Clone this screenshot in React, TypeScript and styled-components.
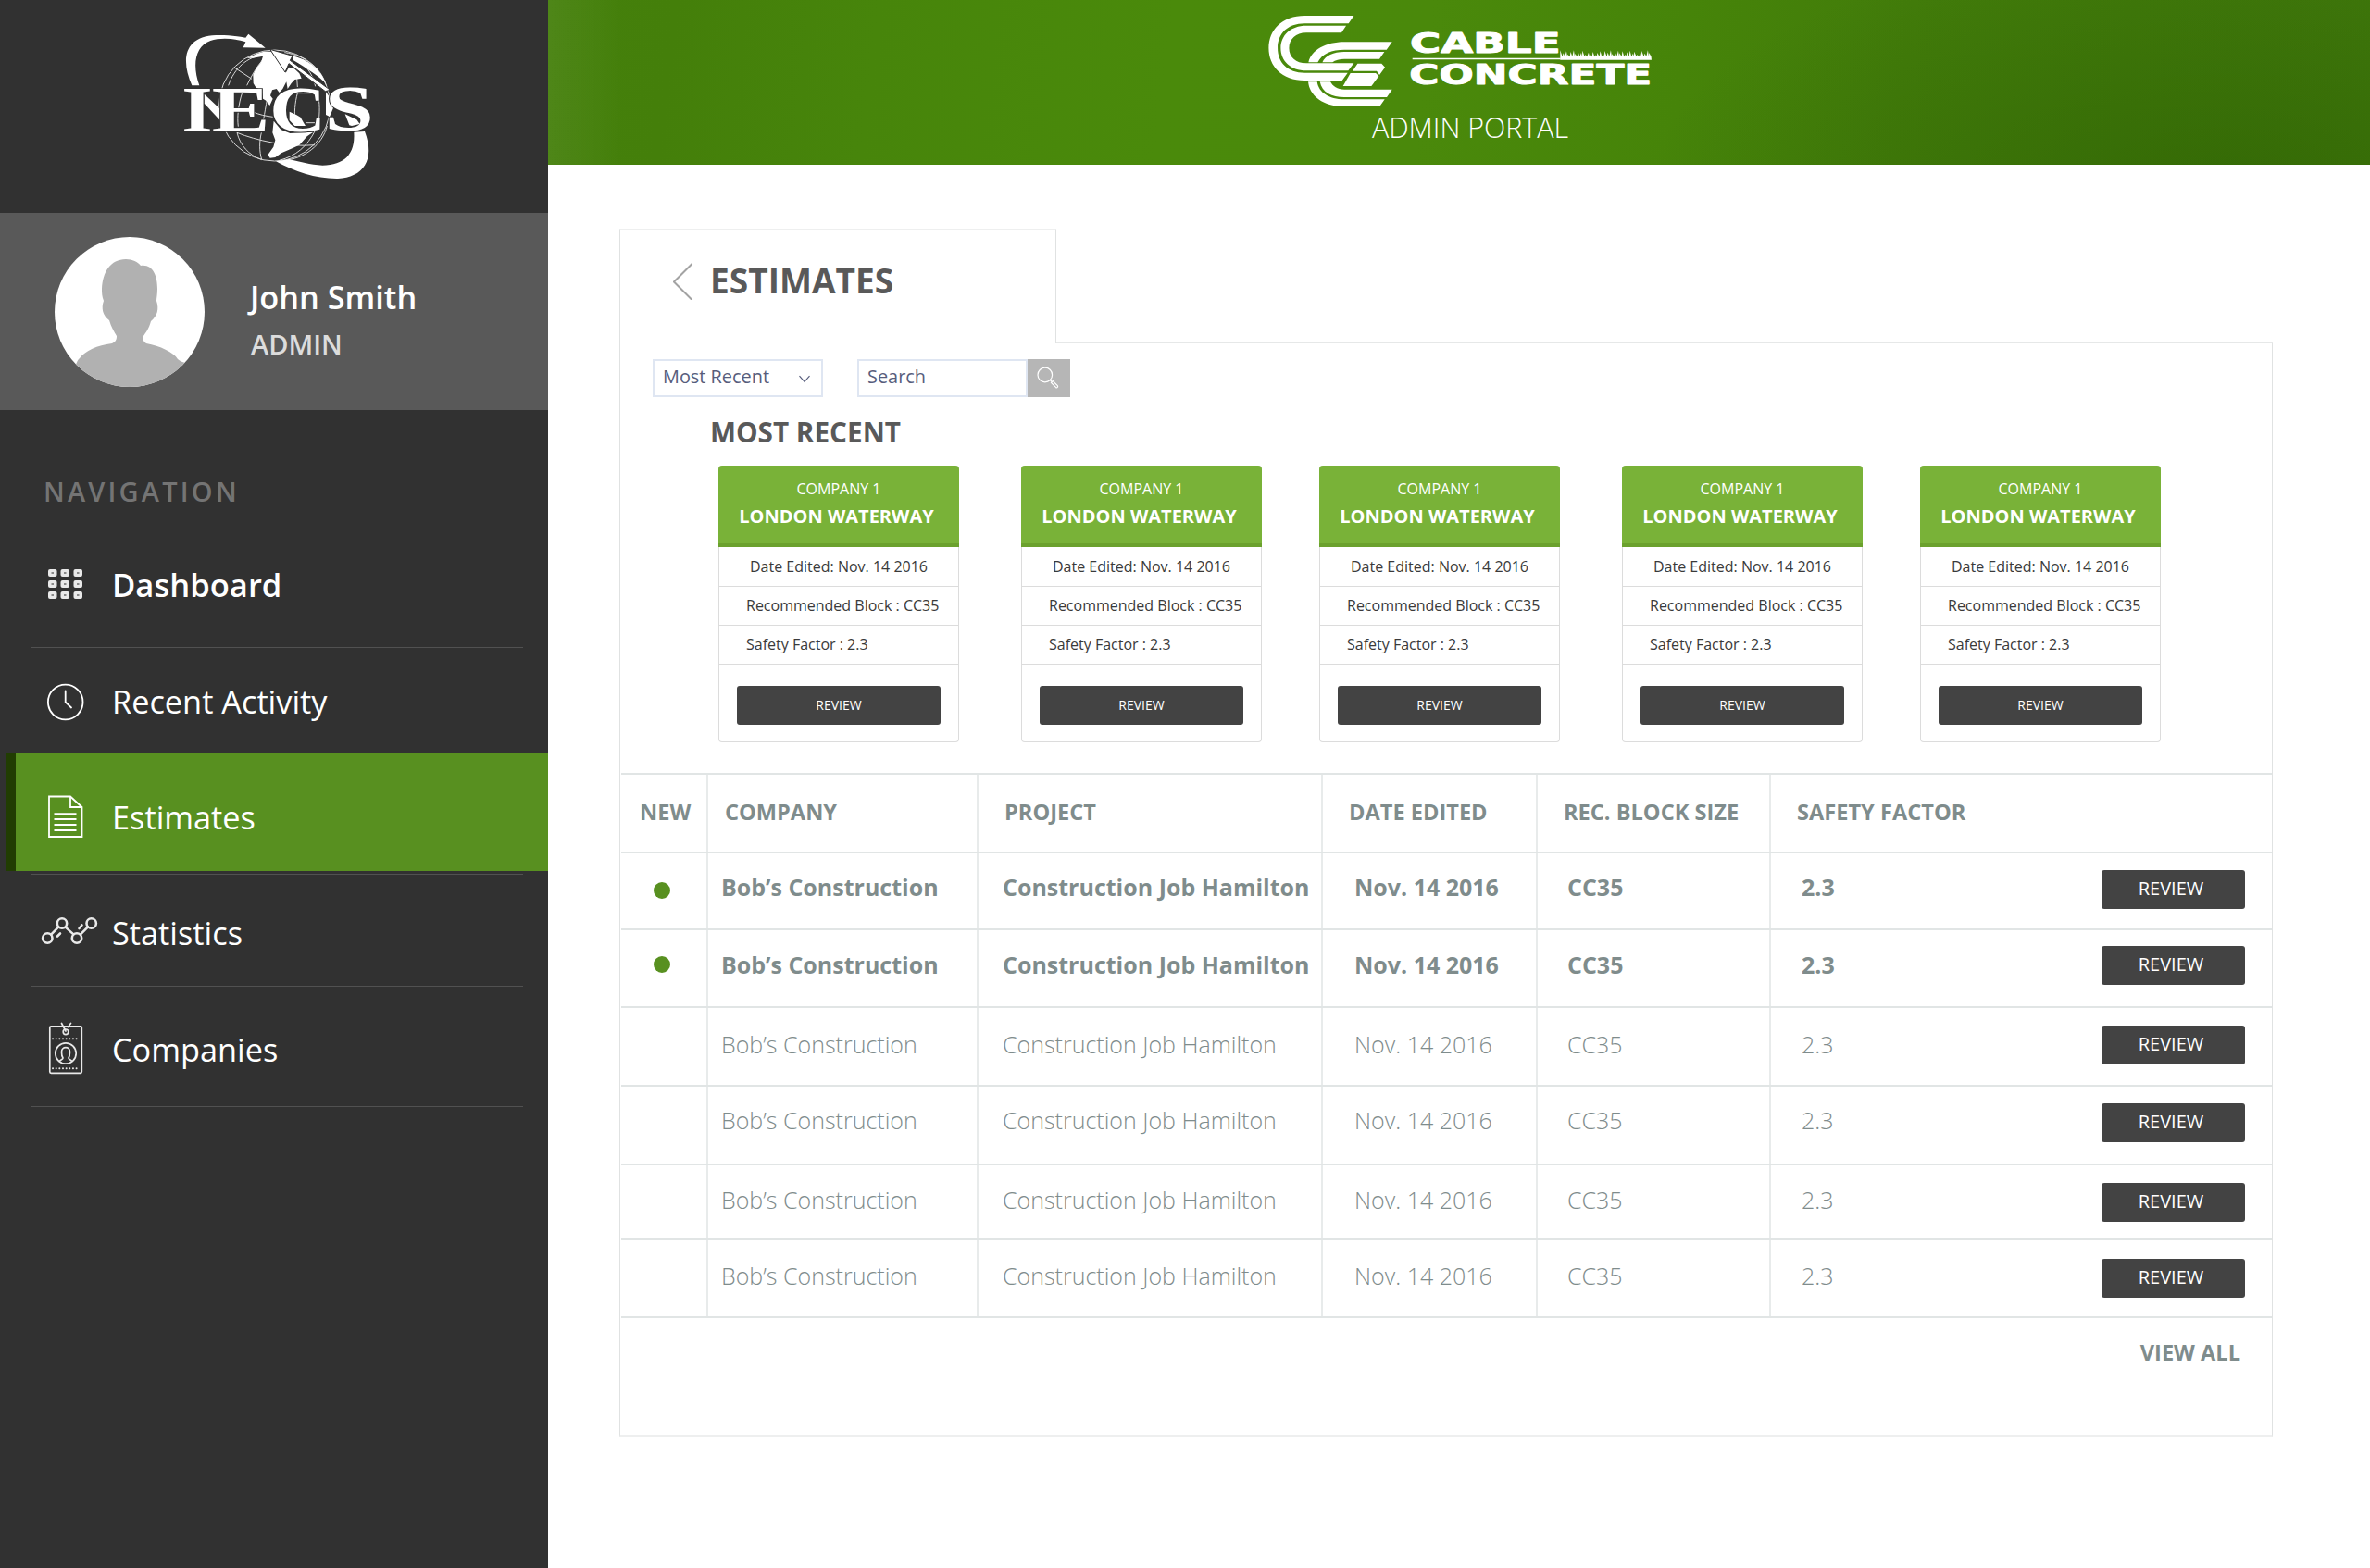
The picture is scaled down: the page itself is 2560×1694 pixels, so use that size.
import React from 'react';
import styled, { createGlobalStyle } from 'styled-components';

const GlobalStyle = createGlobalStyle`
  * { box-sizing: border-box; }
  html, body { margin: 0; padding: 0; background: #fff; }
  body { font-family: "Open Sans", "Noto Sans", sans-serif; }
  svg { display: block; }
  button { font-family: inherit; }
`;

const Page = styled.div`
  display: flex;
  width: 2560px;
  height: 1694px;
  overflow: hidden;
`;

/* ---------- Sidebar ---------- */

const Sidebar = styled.aside`
  width: 592px;
  flex: none;
  background: #313131;
  color: #fff;
`;

const Brand = styled.div`
  height: 230px;
  padding: 10px 0 0 150px;
`;

const Profile = styled.section`
  display: flex;
  height: 213px;
  padding: 26px 0 0 59px;
  background: #595959;
`;

const ProfileText = styled.div`
  margin: 43px 0 0 49px;
`;

const UserName = styled.div`
  font-size: 34.3px;
  font-weight: 600;
  line-height: 44px;
`;

const UserRole = styled.div`
  margin: 9px 0 0 1px;
  font-size: 29px;
  font-weight: 600;
  line-height: 40px;
  color: #dcdcdc;
`;

const NavHeading = styled.h2`
  margin: 0;
  height: 119px;
  padding: 68px 0 0 47px;
  font-size: 29px;
  font-weight: 600;
  line-height: 40px;
  letter-spacing: 3.2px;
  color: #747474;
`;

const NavItem = styled.a<{ $height: number; $bold?: boolean; $active?: boolean; $shift?: number }>`
  display: flex;
  align-items: center;
  height: ${(p) => p.$height}px;
  margin-left: ${(p) => (p.$active ? 7 : 0)}px;
  border-left: ${(p) => (p.$active ? '10px solid #213d02' : 'none')};
  padding: ${(p) => p.$shift ?? 0}px 0 0 ${(p) => (p.$active ? 23 : 40)}px;
  background: ${(p) => (p.$active ? '#589020' : 'transparent')};
  font-size: ${(p) => (p.$bold ? 34.6 : 34.3)}px;
  font-weight: ${(p) => (p.$bold ? 600 : 400)};
  line-height: 48px;
`;

const NavLabel = styled.span`
  margin-left: 11px;
  padding-top: 2px;
`;

const NavDivider = styled.div<{ $gap?: number }>`
  height: 1px;
  margin: ${(p) => p.$gap ?? 0}px 27px 0 34px;
  background: #515151;
`;

/* ---------- Main ---------- */

const Main = styled.main`
  flex: 1;
  display: flex;
  flex-direction: column;
`;

const Header = styled.header`
  display: flex;
  flex-direction: column;
  align-items: center;
  height: 178px;
  padding: 17px 0 0 2px;
  background:
    linear-gradient(90deg, rgba(255, 255, 255, 0.05), rgba(255, 255, 255, 0) 4%),
    radial-gradient(ellipse 620px 260px at 92% 110%, rgba(40, 90, 0, 0.45), rgba(40, 90, 0, 0)),
    linear-gradient(97deg, #45800c 0%, #447f0a 7%, #47850b 18%, #4a8a0b 34%, #4a890b 48%, #468409 62%, #427c0a 74%, #40790a 86%, #3f770b 100%);
`;

const PortalName = styled.div`
  margin-top: 2px;
  padding-left: 22px;
  font-size: 30.4px;
  font-weight: 300;
  line-height: 41px;
  color: #fff;
`;

const Content = styled.div`
  width: 1786px;
  margin: 69px 0 0 77px;
`;

const TabRow = styled.div`
  display: flex;
  height: 124px;
`;

const Tab = styled.div`
  display: flex;
  width: 472px;
  padding: 35px 0 0 57px;
  border: 1px solid #e0e2e2;
  border-top: 2px solid #eeefef;
  border-bottom: none;
`;

const TabTitle = styled.h1`
  margin: -3px 0 0 18px;
  font-size: 37.1px;
  font-weight: 700;
  line-height: 44px;
  color: #595959;
`;

const TabRest = styled.div`
  flex: 1;
  border-bottom: 2px solid #e6e8e8;
`;

const Panel = styled.section`
  height: 1181px;
  padding-top: 17px;
  border: 1px solid #e0e2e2;
  border-top: none;
  border-bottom: 2px solid #eeefef;
`;

const Filters = styled.div`
  display: flex;
  height: 41px;
  padding-left: 35px;
`;

const Field = styled.div`
  display: flex;
  justify-content: space-between;
  width: 184px;
  height: 41px;
  padding: 0 12px 0 9px;
  border: 2px solid #dfe6f2;
  font-size: 19.9px;
  line-height: 33px;
  color: #575d7c;
`;

const SearchGroup = styled.div`
  display: flex;
  margin-left: 37px;
`;

const SearchButton = styled.button`
  width: 46px;
  height: 41px;
  padding: 0;
  border: 0;
  background: #b6b6b6;
`;

const SectionTitle = styled.h2`
  margin: 0;
  height: 74px;
  padding: 18px 0 0 97px;
  font-size: 29.7px;
  font-weight: 700;
  line-height: 40px;
  color: #595959;
`;

const Cards = styled.div`
  display: grid;
  grid-template-columns: 327px 322px 327px 322px 260px;
  height: 332px;
  padding-left: 106px;
`;

const Card = styled.article`
  width: 260px;
  height: 299px;
  border: 1px solid #dcdcdc;
  border-top: none;
  border-radius: 4px;
`;

const CardHead = styled.div`
  height: 88px;
  margin: 0 -1px;
  padding-top: 13px;
  border-bottom: 4px solid #6ba12d;
  border-radius: 4px 4px 0 0;
  background: #79b238;
  color: #fff;
  text-align: center;
`;

const CardCompany = styled.div`
  font-size: 16px;
  line-height: 25px;
`;

const CardProject = styled.div`
  margin-top: 3px;
  padding-right: 5px;
  font-size: 20px;
  font-weight: 700;
  line-height: 28px;
`;

const CardLine = styled.div<{ $indent?: number }>`
  height: 42px;
  padding-left: ${(p) => p.$indent ?? 29}px;
  border-bottom: 1px solid #dcdcdc;
  font-size: 16px;
  line-height: 41px;
  white-space: nowrap;
  color: #3a3a3a;

  &:nth-child(2) {
    height: 43px;
    padding-top: 1px;
  }
`;

const ReviewButton = styled.button<{ $small?: boolean }>`
  display: block;
  width: ${(p) => (p.$small ? 220 : 155)}px;
  height: 42px;
  padding: ${(p) => (p.$small ? '0 0 2px' : '0 5px 3px 0')};
  border: 0;
  border-radius: 3px;
  background: #434343;
  color: #fff;
  font-size: ${(p) => (p.$small ? 14 : 20)}px;
  text-align: center;
`;

const CardAction = styled.div`
  padding: 23px 0 0 19px;
`;

/* ---------- Table ---------- */

const Table = styled.div`
  margin-left: 1px;
  color: #7f8c8c;
`;

const Row = styled.div<{ $height: number; $top: number; $bold?: boolean; $header?: boolean; $last?: boolean }>`
  display: grid;
  grid-template-columns: 94px 292px 372px 232px 252px 1fr;
  height: ${(p) => p.$height}px;
  border-top: 2px solid #e1e5e5;
  border-bottom: ${(p) => (p.$last ? '2px solid #e1e5e5' : 'none')};
  font-size: ${(p) => (p.$header ? 23.6 : 25)}px;
  font-weight: ${(p) => (p.$header || p.$bold ? 700 : 300)};
  line-height: 36px;

  & > div { padding-top: ${(p) => p.$top}px; }
`;

const Cell = styled.div<{ $indent: number }>`
  padding-left: ${(p) => p.$indent}px;
  border-right: 2px solid #e8ebeb;
  white-space: nowrap;
`;

const LastCell = styled.div<{ $indent: number }>`
  display: flex;
  align-items: flex-start;
  justify-content: space-between;
  padding-left: ${(p) => p.$indent}px;
  padding-right: 29px;
`;

const ButtonSlot = styled.div<{ $nudge: number }>`
  margin-top: ${(p) => p.$nudge}px;
`;

const NewDot = styled.span<{ $nudge: number }>`
  display: block;
  width: 18px;
  height: 18px;
  margin: ${(p) => p.$nudge}px 0 0 35px;
  border-radius: 50%;
  background: #589020;
`;

const ViewAll = styled.a`
  display: block;
  padding: 19px 34px 0 0;
  font-size: 23.6px;
  font-weight: 700;
  line-height: 36px;
  text-align: right;
  color: #7f8c8c;
`;

/* ---------- Drawings ---------- */

const IecsLogo = () => (
  <svg width="300" height="210" viewBox="0 0 900 630" fill="#fff">
    <path d="M172 247C136 165 145 88 250 84C285 83 320 87 346 92L355 80L410 125L338 124L346 106C305 93 262 92 232 102C182 120 172 180 196 247Z" />
    <g fill="none" stroke="#d8d8d8" strokeWidth="3">
      <circle cx="440" cy="312" r="180" />
      <path d="M290 247C310 190 350 155 405 147" />
      <path d="M350 247C365 215 380 190 400 165" />
      <path d="M308 188L366 226" />
      <path d="M264 280C262 320 262 350 266 385" />
      <path d="M335 270C322 310 318 350 322 380" />
      <path d="M416 290C411 315 408 335 404 357" />
      <path d="M368 332C390 342 412 346 434 349" />
      <path d="M318 400C380 425 480 448 570 440" />
      <path d="M397 400C390 430 390 460 398 487" />
      <path d="M318 400C328 440 355 472 398 488" />
      <path d="M610 378C595 440 535 485 470 490" />
      <path d="M572 392C545 445 510 475 455 490" />
      <path d="M514 272C505 305 504 335 506 362" />
      <path d="M514 272H578C588 300 586 340 582 368H540" />
      <path d="M472 140C540 150 590 190 606 245" />
      <path d="M530 175C555 200 565 220 572 250" />
      <path d="M512 222L514 252" />
    </g>
    <path d="M350 158L385 143L405 137L430 137L440 152L456 172L470 192L476 206L486 188L504 193L520 208L527 224L505 228L494 240L482 258L478 235L466 258L455 270L446 258L432 262L426 280L434 290L424 312L412 296L402 290L398 262L380 255L371 240L370 212L380 192L396 172L402 152L370 158Z" />
    <path d="M437 362L460 390L490 402L565 398L545 412L520 440L490 454L462 466L442 480L425 482L418 472L436 446L442 424L433 400Z" />
    <path d="M488 332L510 342L524 350L534 368L540 378L505 378L488 360Z" />
    <path d="M606 268L622 290L630 320L618 348L606 342Z" />
    <path d="M500 152C545 160 590 195 606 240C580 215 545 192 500 165Z" />
    <path d="M425 130L498 151L490 166L620 262L604 266L486 176L474 204Z" stroke="#313131" strokeWidth="3" />
    <path d="M212 275L265 325V362L212 305Z" />
    <path d="M697 398C702 470 665 505 595 506C555 505 520 493 486 487L444 493C505 527 575 550 645 549C725 545 768 490 732 396Z" />
    <g fontFamily="'Liberation Serif', serif" fontWeight="700" fontSize="209" stroke="#313131" strokeWidth="5" paintOrder="stroke">
      <text x="139" y="395" textLength="100" lengthAdjust="spacingAndGlyphs">I</text>
      <text x="236" y="395" textLength="188" lengthAdjust="spacingAndGlyphs">E</text>
      <text x="424" y="396" textLength="182" lengthAdjust="spacingAndGlyphs">C</text>
      <text x="602" y="394" textLength="159" lengthAdjust="spacingAndGlyphs">S</text>
    </g>
    <path d="M668 340L706 358L716 372L690 378L682 376Z" />
  </svg>
);

const grassTips = [
  163, 172, 166, 176, 168, 163, 174, 167, 171, 164, 177, 170, 175, 168, 178, 171, 166, 174, 165, 170,
  163, 175, 168, 164, 172, 166, 176, 169, 164, 173, 167, 177, 170, 165, 173, 163, 171,
];
const grassPath =
  'M1035 194' +
  grassTips.map((tip, i) => `L${1037 + i * 8 + (i % 3) * 2 - 2} ${tip}L${1042 + i * 8} 184`).join('') +
  'L1331 194Z';

const CableLogo = () => (
  <svg width="415" height="98.3" viewBox="89 51 1245 295" fill="#fff">
    <path d="M366 51H207C132 51 90 98 90 156C90 214 132 261 207 261H328L346 236H207C150 236 119 202 119 156C119 110 150 76 207 76H349Z" />
    <path d="M341 83H212C160 83 129 115 129 156C129 197 160 229 212 229H348L366 205H212C178 205 156 185 156 156C156 127 178 106 212 106H326Z" />
    <path d="M490 136H335C275 136 228 162 219 202H249C262 174 295 161 335 161H472Z" />
    <path d="M465 168H335C300 168 273 180 264 202H297C305 195 320 191 335 191H449Z" />
    <path d="M218 265C222 312 270 346 335 346H449L466 322H335C285 322 252 300 247 265Z" />
    <path d="M256 265C262 300 295 315 335 315H473L490 290H335C312 290 298 280 290 265Z" />
    <path d="M378 206H456L467 218L449 243L440 230H362Z" />
    <path d="M355 237H437L447 247L423 279H331Z" />
    <path d="M556 188H1036V193H556Z" />
    <path d={grassPath} />
    <g fontFamily="'DejaVu Sans', sans-serif" fontWeight="700" fontSize="93" stroke="#fff" strokeWidth="3" strokeLinejoin="round">
      <text x="548" y="172" textLength="488" lengthAdjust="spacingAndGlyphs">CABLE</text>
      <text x="546" y="272" textLength="786" lengthAdjust="spacingAndGlyphs">CONCRETE</text>
    </g>
  </svg>
);

const Avatar = () => (
  <svg width="162" height="162" viewBox="0 0 162 162">
    <defs>
      <clipPath id="avatar-clip"><circle cx="81" cy="81" r="81" /></clipPath>
    </defs>
    <circle cx="81" cy="81" r="81" fill="#fff" />
    <path
      clipPath="url(#avatar-clip)"
      fill="#b1b1b1"
      d="M77 24C84 24 90 27 93 31C106 29 111 42 111 56C111 62 110 66 110 69C113 78 111 85 104 91C102 99 98 104 96 107C95 111 96 113 99 115C114 118 128 124 133 132C135 134 138 135 141 136L130 162H30L22 140C24 136 24 134 27 131C33 123 46 117 62 115C66 113 67 111 67 107C64 102 61 97 59 90C52 85 50 77 53 69C51 64 51 60 51 56C52 38 60 24 77 24Z"
    />
  </svg>
);

const NavIcon = styled.svg`
  flex: none;
  width: 70px;
  height: 60px;
  overflow: visible;
`;

const DashboardIcon = () => (
  <NavIcon viewBox="0 0 70 60">
    {[14, 26, 38].map((y) =>
      [12, 25.5, 39.5].map((x) => (
        <g key={`${x}-${y}`}>
          <rect x={x} y={y} width="9.5" height="8" rx="2" fill="#e9e9e9" />
          <rect x={x + 3.5} y={y + 3} width="2.5" height="2" fill="#8a8a8a" />
        </g>
      )),
    )}
  </NavIcon>
);

const ClockIcon = () => (
  <NavIcon viewBox="0 0 70 60" fill="none" stroke="#fff" strokeWidth="1.8" strokeLinecap="round">
    <circle cx="30.7" cy="31.5" r="18.8" />
    <path d="M30.7 19.5V31.5L37 37.5" />
  </NavIcon>
);

const DocumentIcon = () => (
  <NavIcon viewBox="0 0 70 60" fill="none" stroke="#fff" strokeWidth="1.8">
    <path d="M13 8.5H36L48.5 20V52H13Z" />
    <path d="M36 8.5V20H48.5" />
    <path d="M18.5 27.2H42.5M18.5 33H42.5M18.5 39H42.5M18.5 45H42.5" />
  </NavIcon>
);

const StatisticsIcon = () => (
  <NavIcon viewBox="0 0 70 60" fill="none" stroke="#e9e9e9" strokeWidth="2.6" strokeLinecap="round">
    <circle cx="11.3" cy="36.5" r="5.2" />
    <circle cx="27" cy="20.5" r="5.2" />
    <circle cx="43" cy="36.5" r="5.2" />
    <circle cx="58.7" cy="20.5" r="5.2" />
    <path d="M15.2 32.6L23.3 24.4M30.6 24.6L39.4 32.4M46.8 32.6L55 24.4M22 34.5L25 31.5M45.5 26L48.5 22.5" />
  </NavIcon>
);

const BadgeIcon = () => (
  <NavIcon viewBox="0 0 70 60" fill="none" stroke="#e9e9e9" strokeWidth="1.7" strokeLinecap="round">
    <rect x="13.8" y="5.8" width="34.5" height="50.5" rx="1.5" />
    <circle cx="31" cy="11.8" r="2.8" />
    <path d="M26.5 2.5L31 11M36.5 2.5L33.5 6.5" />
    <path d="M17 19.2H46M17 51.2H46" strokeDasharray="0.1 3.55" strokeWidth="1.9" />
    <circle cx="31" cy="35" r="11.2" />
    <path d="M24 43.5C26 41.5 28 41.5 28 40C26.5 38 26.5 35.5 26.5 33.5C26.5 27 35.5 27 35.5 33.5C35.5 35.5 35.5 38 34 40C34 41.5 36 41.5 38 43.5" />
  </NavIcon>
);

const BackIcon = () => (
  <svg width="22" height="40" viewBox="0 0 22 40" fill="none" stroke="#a3a3a3" strokeWidth="2">
    <path d="M20.5 1L1 20.5L20.5 40" />
  </svg>
);

const ChevronDown = () => (
  <svg width="12" height="37" viewBox="0 0 12 37" fill="none" stroke="#575d7c" strokeWidth="1.2">
    <path d="M0.5 16.2L6 22.4L11.5 16.2" />
  </svg>
);

const SearchIcon = () => (
  <svg width="46" height="41" viewBox="0 0 46 41" fill="none" stroke="#fff" strokeWidth="1.2">
    <circle cx="18.8" cy="17" r="7.8" />
    <path d="M24.3 22.5L26.3 24.5" />
    <path d="M25.5 25.4L27.3 23.6L32.3 28.6C33.3 30 31.8 31.4 30.5 30.4Z" />
  </svg>
);

/* ---------- Data ---------- */

const estimates = [
  { isNew: true, height: 83, top: 18, button: 0, dot: 13 },
  { isNew: true, height: 84, top: 19, button: -2, dot: 9 },
  { isNew: false, height: 85, top: 21, button: -2, dot: 0 },
  { isNew: false, height: 85, top: 18, button: 0, dot: 0 },
  { isNew: false, height: 81, top: 19, button: 0, dot: 0 },
  { isNew: false, height: 86, top: 20, button: 0, dot: 0 },
];

const recent = Array.from({ length: 5 }, () => ({
  company: 'COMPANY 1',
  project: 'LONDON WATERWAY',
}));

export default function App() {
  return (
    <Page>
      <GlobalStyle />
      <Sidebar>
        <Brand><IecsLogo /></Brand>
        <Profile>
          <Avatar />
          <ProfileText>
            <UserName>John Smith</UserName>
            <UserRole>ADMIN</UserRole>
          </ProfileText>
        </Profile>
        <NavHeading>NAVIGATION</NavHeading>
        <nav>
          <NavItem $height={137} $bold $shift={1}><DashboardIcon /><NavLabel>Dashboard</NavLabel></NavItem>
          <NavDivider />
          <NavItem $height={113} $shift={1}><ClockIcon /><NavLabel>Recent Activity</NavLabel></NavItem>
          <NavItem $height={128} $active $shift={10}><DocumentIcon /><NavLabel>Estimates</NavLabel></NavItem>
          <NavDivider $gap={3} />
          <NavItem $height={120} $shift={4}><StatisticsIcon /><NavLabel>Statistics</NavLabel></NavItem>
          <NavDivider />
          <NavItem $height={129} $shift={5}><BadgeIcon /><NavLabel>Companies</NavLabel></NavItem>
          <NavDivider />
        </nav>
      </Sidebar>
      <Main>
        <Header>
          <CableLogo />
          <PortalName>ADMIN PORTAL</PortalName>
        </Header>
        <Content>
          <TabRow>
            <Tab><BackIcon /><TabTitle>ESTIMATES</TabTitle></Tab>
            <TabRest />
          </TabRow>
          <Panel>
            <Filters>
              <Field>Most Recent<ChevronDown /></Field>
              <SearchGroup>
                <Field>Search</Field>
                <SearchButton aria-label="Search"><SearchIcon /></SearchButton>
              </SearchGroup>
            </Filters>
            <SectionTitle>MOST RECENT</SectionTitle>
            <Cards>
              {recent.map((item, i) => (
                <Card key={i}>
                  <CardHead>
                    <CardCompany>{item.company}</CardCompany>
                    <CardProject>{item.project}</CardProject>
                  </CardHead>
                  <CardLine $indent={33}>Date Edited: Nov. 14 2016</CardLine>
                  <CardLine>Recommended Block : CC35</CardLine>
                  <CardLine>Safety Factor : 2.3</CardLine>
                  <CardAction><ReviewButton $small>REVIEW</ReviewButton></CardAction>
                </Card>
              ))}
            </Cards>
            <Table>
              <Row $height={85} $top={22} $header>
                <Cell $indent={20}>NEW</Cell>
                <Cell $indent={18}>COMPANY</Cell>
                <Cell $indent={28}>PROJECT</Cell>
                <Cell $indent={28}>DATE EDITED</Cell>
                <Cell $indent={28}>REC. BLOCK SIZE</Cell>
                <LastCell $indent={28}>SAFETY FACTOR</LastCell>
              </Row>
              {estimates.map((e, i) => (
                <Row key={i} $height={e.height} $top={e.top} $bold={e.isNew} $last={i === estimates.length - 1}>
                  <Cell $indent={0}>{e.isNew && <NewDot $nudge={e.dot} />}</Cell>
                  <Cell $indent={14}>Bob’s Construction</Cell>
                  <Cell $indent={26}>Construction Job Hamilton</Cell>
                  <Cell $indent={34}>Nov. 14 2016</Cell>
                  <Cell $indent={32}>CC35</Cell>
                  <LastCell $indent={33}>
                    2.3
                    <ButtonSlot $nudge={e.button}><ReviewButton>REVIEW</ReviewButton></ButtonSlot>
                  </LastCell>
                </Row>
              ))}
            </Table>
            <ViewAll>VIEW ALL</ViewAll>
          </Panel>
        </Content>
      </Main>
    </Page>
  );
}
